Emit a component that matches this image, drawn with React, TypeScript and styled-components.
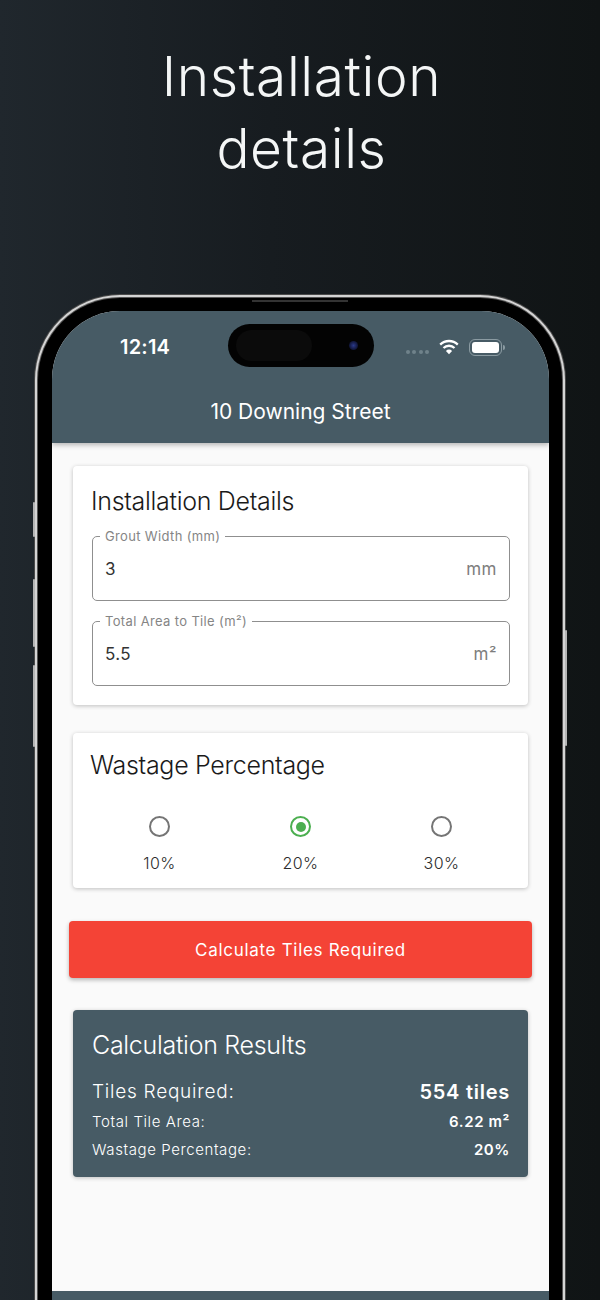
import styled, { createGlobalStyle } from "styled-components";

const GlobalStyle = createGlobalStyle`
  html, body {
    margin: 0;
    padding: 0;
    background: #14181b;
    font-family: Inter, "Liberation Sans", sans-serif;
  }
`;

const Page = styled.div`
  width: 600px;
  height: 1300px;
  overflow: hidden;
  box-sizing: border-box;
  padding-top: 40px;
  background: linear-gradient(90deg, #20272d 0%, #171c20 45%, #101415 100%);
`;

const Headline = styled.h1`
  margin: 0 0 0 3px;
  height: 258px;
  font-size: 55px;
  line-height: 72px;
  font-weight: 300;
  letter-spacing: 0.6px;
  text-align: center;
  color: #f4f6f6;
`;

const Phone = styled.div`
  position: relative;
  width: 497px;
  margin-left: 38px;
  padding: 13px 13px 0 14px;
  background: #000;
  border-radius: 82px 82px 0 0;
  box-shadow: 0 0 0 1px #555, 0 0 0 3px #d4d4d4, 0 0 0 4px #4a4a4a;
`;

const Speaker = styled.div`
  position: absolute;
  top: 2px;
  left: 214px;
  width: 96px;
  height: 2px;
  background: #333;
`;

const SideButton = styled.div<{ $top: number; $height: number; $right?: boolean }>`
  position: absolute;
  top: ${(p) => p.$top}px;
  ${(p) => (p.$right ? "right: -5px;" : "left: -5px;")}
  width: 2px;
  height: ${(p) => p.$height}px;
  background: #b5b5b5;
  border-radius: 1px;
`;

const Screen = styled.div`
  position: relative;
  overflow: hidden;
  border-radius: 68px 68px 0 0;
  background: #fafafa;
`;

const Island = styled.div`
  position: absolute;
  z-index: 2;
  top: 13px;
  left: 176px;
  width: 146px;
  height: 43px;
  border-radius: 22px;
  background: #030303;
`;

const IslandSensor = styled.div`
  position: absolute;
  top: 6px;
  left: 8px;
  width: 76px;
  height: 31px;
  border-radius: 16px;
  background: #0b0b0b;
`;

const IslandCamera = styled.div`
  position: absolute;
  top: 17px;
  right: 16px;
  width: 9px;
  height: 9px;
  border-radius: 50%;
  background: radial-gradient(circle, #2b3a8a 0%, #141b45 55%, #07081a 100%);
`;

const AppHeader = styled.header`
  position: relative;
  z-index: 1;
  padding: 24px 44px 18px 68px;
  background: #475b65;
  box-shadow: 0 2px 5px rgba(0, 0, 0, 0.28);
  color: #fff;
`;

const StatusRow = styled.div`
  display: flex;
  align-items: center;
  justify-content: space-between;
  height: 24px;
`;

const Clock = styled.span`
  font-size: 20px;
  font-weight: 600;
  letter-spacing: 0.2px;
`;

const StatusIcons = styled.div`
  display: flex;
  align-items: center;
`;

const SignalDots = styled.div`
  display: flex;
  gap: 2.5px;
  margin: 10px 10px 0 0;
`;

const SignalDot = styled.span`
  width: 4px;
  height: 4px;
  border-radius: 50%;
  background: #6f828b;
`;

const BatteryShell = styled.div`
  display: flex;
  width: 33px;
  height: 17px;
  box-sizing: border-box;
  margin-left: 10px;
  padding: 2px;
  border: 1px solid #8b9ba2;
  border-radius: 6px;
`;

const BatteryFill = styled.div`
  flex: 1;
  border-radius: 3px;
  background: #fff;
`;

const BatteryCap = styled.div`
  width: 2px;
  height: 5px;
  margin-left: 1px;
  border-radius: 0 2px 2px 0;
  background: #8b9ba2;
`;

const HeaderTitle = styled.div`
  margin: 40px 0 0 -24px;
  font-size: 21px;
  line-height: 26px;
  font-weight: 400;
  text-align: center;
`;

const Content = styled.main`
  display: flex;
  flex-direction: column;
  height: 848px;
  box-sizing: border-box;
  padding: 23px 21px 0;
  background: #fafafa;
`;

const Card = styled.section`
  border-radius: 4px;
  background: #fff;
  box-shadow: 0 1px 4px rgba(0, 0, 0, 0.24);
`;

const DetailsCard = styled(Card)`
  height: 239px;
  box-sizing: border-box;
  padding: 17px 18px 0 19px;
`;

const WastageCard = styled(Card)`
  height: 155px;
  box-sizing: border-box;
  margin-top: 28px;
  padding: 14px 17px 0;
`;

const CardTitle = styled.h2<{ $light?: boolean; $pull?: boolean }>`
  margin: 0 0 0 ${(p) => (p.$pull ? -1 : 0)}px;
  font-size: 25px;
  line-height: 36px;
  font-weight: 350;
  letter-spacing: -0.3px;
  color: ${(p) => (p.$light ? "#fff" : "#1a1a1a")};
`;

const Field = styled.fieldset`
  display: flex;
  align-items: center;
  justify-content: space-between;
  height: 72px;
  box-sizing: border-box;
  margin: 10px 0 13px;
  padding: 0 12px 6px;
  border: 1px solid #8f8f8f;
  border-radius: 5px;
`;

const FieldLegend = styled.legend`
  margin-left: -5px;
  padding: 0 5px;
  font-size: 13px;
  line-height: 14px;
  letter-spacing: 0.35px;
  color: #858585;
`;

const FieldRow = styled.div`
  display: flex;
  align-items: center;
  justify-content: space-between;
  width: 100%;
`;

const FieldValue = styled.span`
  font-size: 17px;
  letter-spacing: 0.3px;
  color: #333;
`;

const FieldUnit = styled.span`
  font-size: 17px;
  letter-spacing: 0.5px;
  color: #7d7d7d;
`;

const RadioGrid = styled.div`
  display: grid;
  grid-template-columns: repeat(3, 141px);
  justify-content: center;
  margin-top: 33px;
`;

const RadioOption = styled.label`
  display: flex;
  flex-direction: column;
  align-items: center;
  gap: 16px;
  font-size: 16px;
  line-height: 20px;
  font-weight: 350;
  letter-spacing: 0.4px;
  color: #2c2c2c;
`;

const RadioMark = styled.span<{ $checked?: boolean }>`
  display: flex;
  align-items: center;
  justify-content: center;
  width: 21px;
  height: 21px;
  box-sizing: border-box;
  border: 2.5px solid ${(p) => (p.$checked ? "#4caf50" : "#757575")};
  border-radius: 50%;

  &::after {
    content: "";
    display: ${(p) => (p.$checked ? "block" : "none")};
    width: 10px;
    height: 10px;
    border-radius: 50%;
    background: #4caf50;
  }
`;

const CalculateButton = styled.button`
  height: 57px;
  margin: 33px -4px 0;
  border: 0;
  border-radius: 4px;
  background: #f44336;
  box-shadow: 0 2px 4px rgba(0, 0, 0, 0.28);
  font-family: inherit;
  font-size: 17px;
  font-weight: 400;
  letter-spacing: 0.7px;
  color: #fff;
`;

const ResultsCard = styled(Card)`
  height: 167px;
  box-sizing: border-box;
  margin-top: 32px;
  padding: 17px 18px 0 19px;
  background: #475b65;
  color: #fff;
`;

const ResultRow = styled.div<{ $large?: boolean }>`
  display: flex;
  align-items: center;
  justify-content: space-between;
  height: ${(p) => (p.$large ? 31 : 28)}px;
  font-size: ${(p) => (p.$large ? 19 : 15)}px;
  letter-spacing: ${(p) => (p.$large ? 0.75 : 0.6)}px;
  font-weight: 300;
`;

const ResultValue = styled.strong<{ $large?: boolean }>`
  font-size: ${(p) => (p.$large ? 20 : 15)}px;
  font-weight: 600;
`;

const Rows = styled.div`
  margin-top: 13px;
`;

const BottomBar = styled.footer`
  height: 30px;
  background: #475b65;
`;

const WifiIcon = () => (
  <svg width="20" height="16" viewBox="0 0 20 16" fill="none" stroke="#fff">
    <path d="M1.2 5.6A12.6 12.6 0 0 1 18.8 5.6" strokeWidth="2.3" />
    <path d="M4.5 9A7.9 7.9 0 0 1 15.5 9" strokeWidth="2.3" />
    <path d="M6.9 11.9L10 15.3L13.1 11.9A4.4 4.4 0 0 0 6.9 11.9Z" fill="#fff" stroke="none" />
  </svg>
);

const options = [
  { label: "10%" },
  { label: "20%", checked: true },
  { label: "30%" },
];

export default function App() {
  return (
    <>
      <GlobalStyle />
      <Page>
        <Headline>
          Installation
          <br />
          details
        </Headline>
        <Phone>
          <Speaker />
          <SideButton $top={204} $height={35} />
          <SideButton $top={281} $height={68} />
          <SideButton $top={367} $height={82} />
          <SideButton $right $top={332} $height={116} />
          <Screen>
            <AppHeader>
              <StatusRow>
                <Clock>12:14</Clock>
                <StatusIcons>
                  <SignalDots>
                    <SignalDot />
                    <SignalDot />
                    <SignalDot />
                    <SignalDot />
                  </SignalDots>
                  <WifiIcon />
                  <BatteryShell>
                    <BatteryFill />
                  </BatteryShell>
                  <BatteryCap />
                </StatusIcons>
              </StatusRow>
              <HeaderTitle>10 Downing Street</HeaderTitle>
            </AppHeader>
            <Island>
              <IslandSensor />
              <IslandCamera />
            </Island>
            <Content>
              <DetailsCard>
                <CardTitle $pull>Installation Details</CardTitle>
                <Field>
                  <FieldLegend>Grout Width (mm)</FieldLegend>
                  <FieldRow>
                    <FieldValue>3</FieldValue>
                    <FieldUnit>mm</FieldUnit>
                  </FieldRow>
                </Field>
                <Field>
                  <FieldLegend>Total Area to Tile (m²)</FieldLegend>
                  <FieldRow>
                    <FieldValue>5.5</FieldValue>
                    <FieldUnit>m²</FieldUnit>
                  </FieldRow>
                </Field>
              </DetailsCard>
              <WastageCard>
                <CardTitle>Wastage Percentage</CardTitle>
                <RadioGrid>
                  {options.map((o) => (
                    <RadioOption key={o.label}>
                      <RadioMark $checked={o.checked} />
                      {o.label}
                    </RadioOption>
                  ))}
                </RadioGrid>
              </WastageCard>
              <CalculateButton>Calculate Tiles Required</CalculateButton>
              <ResultsCard>
                <CardTitle $light>Calculation Results</CardTitle>
                <Rows>
                  <ResultRow $large>
                    <span>Tiles Required:</span>
                    <ResultValue $large>554 tiles</ResultValue>
                  </ResultRow>
                  <ResultRow>
                    <span>Total Tile Area:</span>
                    <ResultValue>6.22 m²</ResultValue>
                  </ResultRow>
                  <ResultRow>
                    <span>Wastage Percentage:</span>
                    <ResultValue>20%</ResultValue>
                  </ResultRow>
                </Rows>
              </ResultsCard>
            </Content>
            <BottomBar />
          </Screen>
        </Phone>
      </Page>
    </>
  );
}
